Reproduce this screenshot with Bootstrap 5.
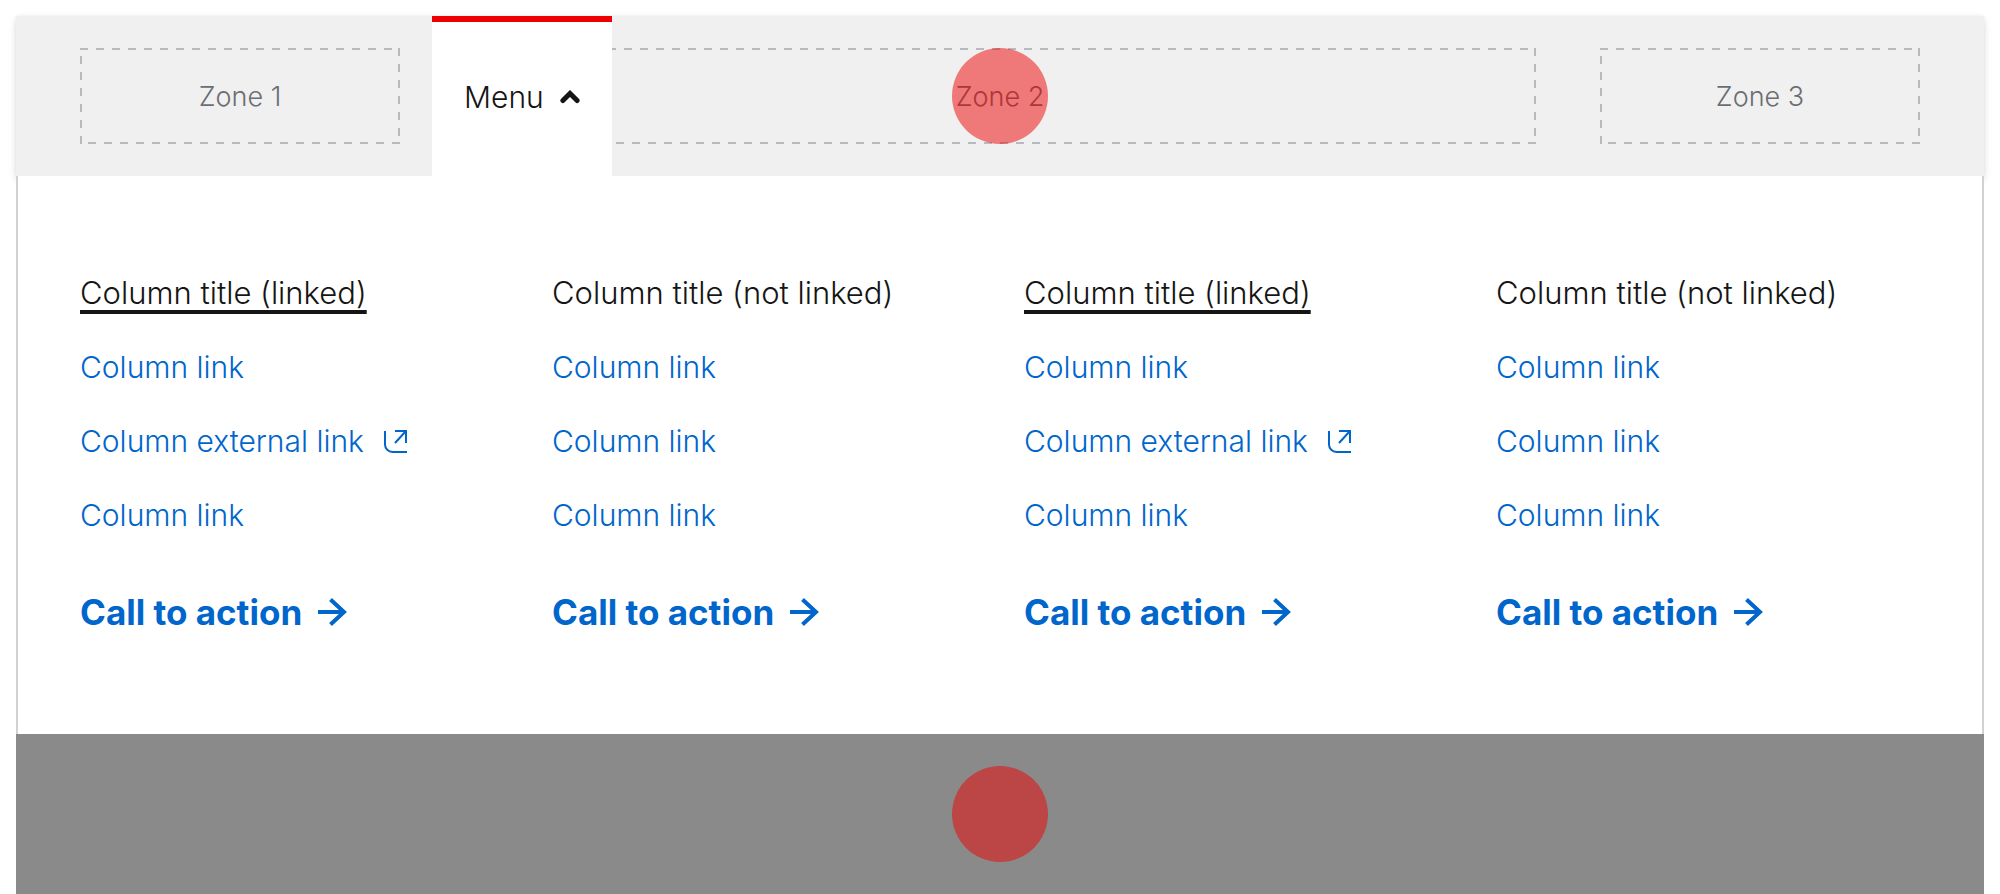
<!DOCTYPE html>
<html lang="en">
<head>
<meta charset="utf-8">
<meta name="viewport" content="width=device-width, initial-scale=1">
<title>Navigation menu</title>
<link href="https://cdn.jsdelivr.net/npm/bootstrap@5.3.0/dist/css/bootstrap.min.css" rel="stylesheet">
<style>
  :root { --ink: #151515; --accent: #e00; --link: #06c; --dash: #b8bbbe; --hot: rgba(238, 0, 0, .5); }
  body { font-family: Inter, "Open Sans", sans-serif; font-size: 30px; font-weight: 300; line-height: 48px; color: var(--ink); background: #fff; }
  .site-bar { background: #f0f0f0; padding: 32px 64px; gap: 64px; box-shadow: 0 4px 8px rgba(3, 3, 3, .12), 0 0 4px rgba(3, 3, 3, .06); }
  .zone { height: 96px; padding-top: 2px; font-size: 27px; color: #6a6e73;
    background:
      repeating-linear-gradient(to right, var(--dash) 0 8px, transparent 8px 16px) top / 100% 2px no-repeat,
      repeating-linear-gradient(to bottom, var(--dash) 0 8px, transparent 8px 16px) right / 2px 100% no-repeat,
      repeating-linear-gradient(to left, var(--dash) 0 8px, transparent 8px 16px) bottom / 100% 2px no-repeat,
      repeating-linear-gradient(to top, var(--dash) 0 8px, transparent 8px 16px) left / 2px 100% no-repeat; }
  .zone-side { flex: 0 0 320px; }
  .menu-tab { position: absolute; left: -32px; top: -32px; bottom: -32px; padding: 0 32px; gap: 16px; border: 0; border-top: 6px solid var(--accent); border-bottom: 4px solid #fff; background: #fff; color: var(--ink); font-size: 30px; font-weight: 300; }
  .hot-spot { width: 96px; height: 96px; border-radius: 50%; background: var(--hot); }
  .zone .hot-spot { position: absolute; left: 50%; top: 50%; transform: translate(-50%, -50%); }
  .menu-panel { position: relative; background: #fff; border: solid #d2d2d2; border-width: 0 2px; padding: 93px 62px 95px; }
  .menu-title { font-size: 31px; font-weight: 300; line-height: 48px; margin: 0; }
  .menu-title a { color: var(--ink); text-decoration: underline; text-decoration-thickness: 4px; text-underline-offset: 6px; }
  .menu-links { gap: 26px; margin: 26px 0 46px; }
  .menu-links a, .cta { color: var(--link); text-decoration: none; }
  .menu-links a { gap: 20px; }
  .cta { font-size: 35px; font-weight: 700; line-height: 54px; gap: 16px; }
  .backdrop { background: #8a8a8a; padding: 32px; }
</style>
</head>
<body>
<div class="min-vh-100 d-flex flex-column px-3 pt-3">
  <header class="site-bar d-flex">
    <div class="zone zone-side d-flex align-items-center justify-content-center">Zone 1</div>
    <div class="zone position-relative flex-grow-1 d-flex align-items-center justify-content-center">
      Zone 2
      <span class="hot-spot"></span>
      <button type="button" class="menu-tab d-flex align-items-center" aria-expanded="true" aria-controls="menu">Menu
        <svg width="20" height="14" viewBox="0 0 20 14" fill="none" stroke="currentColor" stroke-width="5" stroke-linecap="round" stroke-linejoin="miter" aria-hidden="true"><path d="M2.9 10.6 10 3.5l7.100 7.100"/></svg>
      </button>
    </div>
    <div class="zone zone-side d-flex align-items-center justify-content-center">Zone 3</div>
  </header>

  <nav class="menu-panel" id="menu">
    <div class="row gx-5">
      <div class="col-3">
        <h2 class="menu-title"><a href="#">Column title (linked)</a></h2>
        <ul class="menu-links list-unstyled d-flex flex-column">
          <li><a href="#">Column link</a></li>
          <li><a href="#" class="d-inline-flex align-items-center">Column external link <svg width="23" height="23" viewBox="0 0 23 23" fill="none" stroke="currentColor" stroke-width="2" aria-hidden="true"><path d="M1 1v13.500a7.500 7.500 0 0 0 7.500 7.500H23M11 1h11v12M22 1 11 13"/></svg></a></li>
          <li><a href="#">Column link</a></li>
        </ul>
        <a href="#" class="cta d-inline-flex align-items-center">Call to action <svg width="29" height="28" viewBox="0 0 29 28" fill="none" stroke="currentColor" stroke-width="4" aria-hidden="true"><path d="M0 14h26M12.500 1.500 26 14 12.500 26.500"/></svg></a>
      </div>
      <div class="col-3">
        <h2 class="menu-title">Column title (not linked)</h2>
        <ul class="menu-links list-unstyled d-flex flex-column">
          <li><a href="#">Column link</a></li>
          <li><a href="#">Column link</a></li>
          <li><a href="#">Column link</a></li>
        </ul>
        <a href="#" class="cta d-inline-flex align-items-center">Call to action <svg width="29" height="28" viewBox="0 0 29 28" fill="none" stroke="currentColor" stroke-width="4" aria-hidden="true"><path d="M0 14h26M12.500 1.500 26 14 12.500 26.500"/></svg></a>
      </div>
      <div class="col-3">
        <h2 class="menu-title"><a href="#">Column title (linked)</a></h2>
        <ul class="menu-links list-unstyled d-flex flex-column">
          <li><a href="#">Column link</a></li>
          <li><a href="#" class="d-inline-flex align-items-center">Column external link <svg width="23" height="23" viewBox="0 0 23 23" fill="none" stroke="currentColor" stroke-width="2" aria-hidden="true"><path d="M1 1v13.500a7.500 7.500 0 0 0 7.500 7.500H23M11 1h11v12M22 1 11 13"/></svg></a></li>
          <li><a href="#">Column link</a></li>
        </ul>
        <a href="#" class="cta d-inline-flex align-items-center">Call to action <svg width="29" height="28" viewBox="0 0 29 28" fill="none" stroke="currentColor" stroke-width="4" aria-hidden="true"><path d="M0 14h26M12.500 1.500 26 14 12.500 26.500"/></svg></a>
      </div>
      <div class="col-3">
        <h2 class="menu-title">Column title (not linked)</h2>
        <ul class="menu-links list-unstyled d-flex flex-column">
          <li><a href="#">Column link</a></li>
          <li><a href="#">Column link</a></li>
          <li><a href="#">Column link</a></li>
        </ul>
        <a href="#" class="cta d-inline-flex align-items-center">Call to action <svg width="29" height="28" viewBox="0 0 29 28" fill="none" stroke="currentColor" stroke-width="4" aria-hidden="true"><path d="M0 14h26M12.500 1.500 26 14 12.500 26.500"/></svg></a>
      </div>
    </div>
  </nav>

  <div class="backdrop flex-grow-1 d-flex justify-content-center align-items-start">
    <span class="hot-spot"></span>
  </div>
</div>
<script src="https://cdn.jsdelivr.net/npm/bootstrap@5.3.0/dist/js/bootstrap.bundle.min.js"></script>
</body>
</html>
